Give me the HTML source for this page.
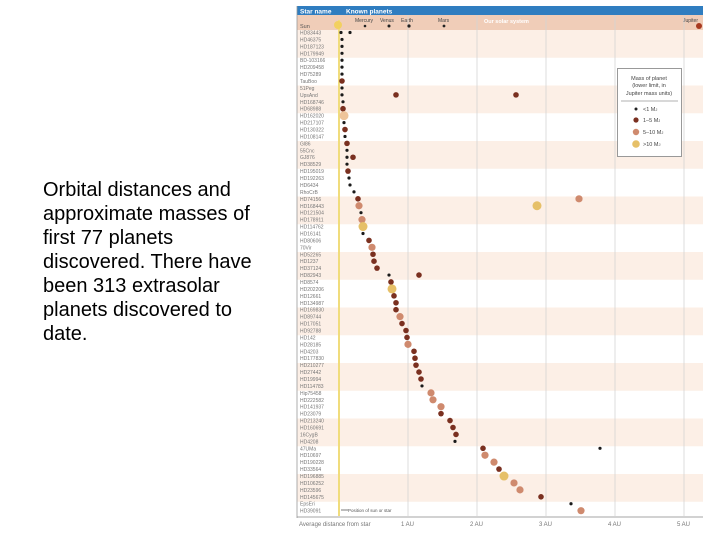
<!DOCTYPE html>
<html><head><meta charset="utf-8"><style>
body{margin:0;width:720px;height:540px;background:#fff;overflow:hidden;position:relative;font-family:"Liberation Sans",sans-serif}
#cap{position:absolute;left:43px;top:178px;font-size:20px;line-height:24px;color:#000;width:214px}
svg{position:absolute;left:0;top:0}
</style></head><body>
<div id="cap">Orbital distances and approximate masses of first 77 planets discovered. There have been 313 extrasolar planets discovered to date.</div>
<svg id="s" width="720" height="540" xmlns="http://www.w3.org/2000/svg" font-family="Liberation Sans, sans-serif">
<rect x="297" y="6" width="406" height="9" fill="#2f7dc0"/>
<text x="300" y="13.5" font-size="6.5" font-weight="bold" fill="#fff">Star name</text>
<text x="346" y="13.5" font-size="6.5" font-weight="bold" fill="#fff">Known planets</text>
<rect x="297" y="15" width="406" height="15" fill="#f0cdb8"/>
<text x="484" y="23" font-size="5.5" font-weight="bold" fill="#fff">Our solar system</text>
<text x="300" y="28" font-size="5.5" fill="#555">Sun</text>
<text x="355" y="22" font-size="5" fill="#444">Mercury</text>
<text x="380" y="22" font-size="5" fill="#444">Venus</text>
<text x="401" y="22" font-size="5" fill="#444">Earth</text>
<text x="438" y="22" font-size="5" fill="#444">Mars</text>
<text x="683" y="22" font-size="5" fill="#444">Jupiter</text>
<g id="bands"></g>
<g stroke="#d4d4d4" stroke-width="0.8">
<line x1="408" y1="15" x2="408" y2="516"/><line x1="477" y1="15" x2="477" y2="516"/>
<line x1="546" y1="15" x2="546" y2="516"/><line x1="615" y1="15" x2="615" y2="516"/>
<line x1="684" y1="15" x2="684" y2="516"/>
</g>
<line x1="297" y1="6" x2="297" y2="518" stroke="#999" stroke-width="0.8"/>
<line x1="339" y1="20" x2="339" y2="516" stroke="#f0dc7c" stroke-width="2"/>
<circle cx="338" cy="25" r="4" fill="#f2d060"/>
<circle cx="365" cy="26" r="1.3" fill="#222"/><circle cx="389" cy="26" r="1.5" fill="#222"/>
<circle cx="409" cy="26" r="1.6" fill="#222"/><circle cx="444" cy="26" r="1.4" fill="#222"/>
<circle cx="699" cy="26" r="3" fill="#a83a20"/>
<g id="names" font-size="5" fill="#777"></g>
<g id="dots"></g>
<line x1="297" y1="517" x2="703" y2="517" stroke="#888" stroke-width="0.8"/>
<g font-size="6" fill="#777">
<text x="299" y="526">Average distance from star</text>
<text x="401" y="526">1 AU</text><text x="470" y="526">2 AU</text><text x="539" y="526">3 AU</text><text x="608" y="526">4 AU</text><text x="677" y="526">5 AU</text>
</g>
<line x1="341" y1="510" x2="348" y2="510" stroke="#222" stroke-width="0.6"/>
<text x="348" y="512" font-size="4.5" fill="#555">Position of sun or star</text>
<rect x="617.5" y="68.5" width="64" height="88" fill="#fff" stroke="#999"/>
<g font-size="5.5" fill="#444" text-anchor="middle">
<text x="649" y="80">Mass of planet</text><text x="649" y="87">(lower limit, in</text><text x="649" y="95">Jupiter mass units)</text>
</g>
<line x1="621" y1="101" x2="678" y2="101" stroke="#999" stroke-width="0.8"/>
<circle cx="636" cy="109" r="1.5" fill="#222"/><circle cx="636" cy="120" r="2.6" fill="#7a3020"/>
<circle cx="636" cy="132" r="3.2" fill="#cf8a6e"/><circle cx="636" cy="144" r="3.8" fill="#e6c068"/>
<g font-size="5.5" fill="#444">
<text x="643" y="111">&lt;1 M<tspan font-size="4">J</tspan></text><text x="643" y="122">1–5 M<tspan font-size="4">J</tspan></text>
<text x="643" y="134">5–10 M<tspan font-size="4">J</tspan></text><text x="643" y="146">&gt;10 M<tspan font-size="4">J</tspan></text>
</g>
</svg>
<script>
var N=["HD83443","HD46375","HD187123","HD179949","BD-103166","HD209458","HD75289","TauBoo","51Peg","UpsAnd","HD168746","HD68988","HD162020","HD217107","HD130322","HD108147","Gl86","55Cnc","GJ876","HD38529","HD195019","HD192263","HD6434","RhoCrB","HD74156","HD168443","HD121504","HD178911","HD114762","HD16141","HD80606","70Vir","HD52265","HD1237","HD37124","HD82943","HD8574","HD202206","HD12661","HD134987","HD169830","HD89744","HD17051","HD92788","HD142","HD28185","HD4203","HD177830","HD210277","HD27442","HD19994","HD114783","Hip75458","HD222582","HD141937","HD23079","HD213240","HD160691","16CygB","HD4208","47UMa","HD10697","HD190228","HD33564","HD196885","HD106252","HD23596","HD145675","EpsEri","HD39091"];
var D=[[0,341,'b'],[0,350,'b'],[1,342,'b'],[2,342,'b'],[3,342,'b'],[4,342,'b'],[5,342,'b'],[6,342,'b'],[7,342,'d'],[8,342,'b'],[9,342,'b'],[9,396,'d'],[9,516,'d'],[10,343,'b'],[11,343,'d'],[12,344,'p'],[13,344,'b'],[14,345,'d'],[15,345,'b'],[16,347,'d'],[17,347,'b'],[18,347,'b'],[18,353,'d'],[19,347,'b'],[20,348,'d'],[21,349,'b'],[22,350,'b'],[23,354,'b'],[24,358,'d'],[24,579,'s'],[25,359,'s'],[25,537,'y'],[26,361,'b'],[27,362,'s'],[28,363,'y'],[29,363,'b'],[30,369,'d'],[31,372,'s'],[32,373,'d'],[33,374,'d'],[34,377,'d'],[35,389,'b'],[35,419,'d'],[36,391,'d'],[37,392,'y'],[38,394,'d'],[39,396,'d'],[40,396,'d'],[41,400,'s'],[42,402,'d'],[43,406,'d'],[44,407,'d'],[45,408,'s'],[46,414,'d'],[47,415,'d'],[48,416,'d'],[49,419,'d'],[50,421,'d'],[51,422,'b'],[52,431,'s'],[53,433,'s'],[54,441,'s'],[55,441,'d'],[56,450,'d'],[57,453,'d'],[58,456,'d'],[59,455,'b'],[60,483,'d'],[60,600,'b'],[61,485,'s'],[62,494,'s'],[63,499,'d'],[64,504,'y'],[65,514,'s'],[66,520,'s'],[67,541,'d'],[68,571,'b'],[69,581,'s']];
var ns="http://www.w3.org/2000/svg";function el(t,a,p){var e=document.createElementNS(ns,t);for(var k in a)e.setAttribute(k,a[k]);document.getElementById(p).appendChild(e);return e;}
for(var b=0;b<18;b++){if(b%2==0){var y=30+b*27.75;el('rect',{x:297,y:y,width:406,height:Math.min(27.75,516-y),fill:'#fcefe6'},'bands');}}
function Y(i){return 32.5+6.93*i;}
N.forEach(function(n,i){el('text',{x:300,y:Y(i)+2},'names').textContent=n;});
var C={b:['#1a1a1a',1.6],d:['#7a3020',2.8],s:['#cf8a6e',3.6],y:['#e6c068',4.5],p:['#eec49a',4.5]};
D.forEach(function(d){el('circle',{cx:d[1],cy:Y(d[0]),r:C[d[2]][1],fill:C[d[2]][0]},'dots');});
</script>
</body></html>
